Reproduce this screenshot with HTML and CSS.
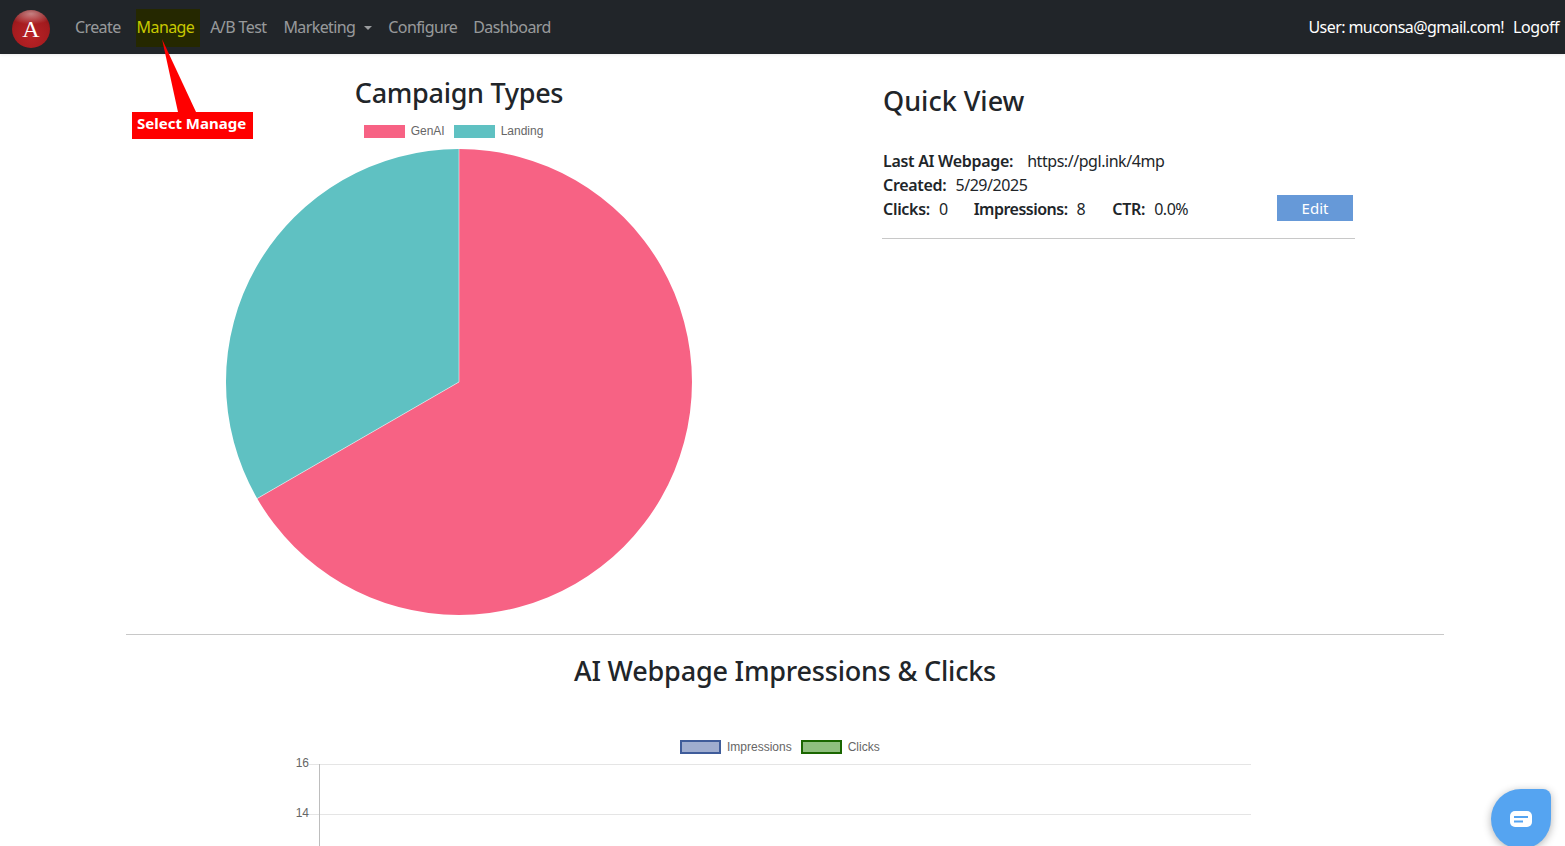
FILE: index.html
```html
<!DOCTYPE html>
<html lang="en">
<head>
    <meta charset="UTF-8">
    <meta name="viewport" content="width=device-width, initial-scale=1.0">
    <title>Dashboard</title>
    <link rel="stylesheet" href="styles.css">
</head>
<body>
    <nav class="navbar">
        <a class="brand" href="#"><span class="brand-letter">A</span></a>
        <ul class="nav-links">
            <li><a href="#">Create</a></li>
            <li><a class="active" href="#">Manage</a></li>
            <li><a href="#">A/B Test</a></li>
            <li><a class="dropdown" href="#">Marketing</a></li>
            <li><a href="#">Configure</a></li>
            <li><a href="#">Dashboard</a></li>
        </ul>
        <div class="nav-user">
            <span class="user-name">User: muconsa@gmail.com!</span>
            <a href="#">Logoff</a>
        </div>
    </nav>

    <!-- callout over the nav -->
    <svg class="callout-arrow" width="40" height="75" viewBox="0 0 40 75">
        <polygon points="2,1 18,74 36,74" fill="#ff0000"/>
    </svg>
    <div class="callout-label">Select Manage</div>

    <main class="container">
        <div class="top-row">
            <section class="pie-col">
                <h2 class="chart-title">Campaign Types</h2>
                <div class="legend legend-pie">
                    <span class="swatch swatch-pink"></span><span class="legend-text">GenAI</span>
                    <span class="swatch swatch-teal"></span><span class="legend-text">Landing</span>
                </div>
                <svg class="pie" width="468" height="468" viewBox="-234 -234 468 468">
                    <path d="M0 0 L0 -233 A233 233 0 1 1 -201.8 116.5 Z" fill="#f76284"/>
                    <path d="M0 0 L-201.8 116.5 A233 233 0 0 1 0 -233 Z" fill="#5fc1c2"/>
                    <path d="M0 -233 L0 0 L-201.8 116.5" fill="none" stroke="#fff" stroke-opacity="0.5" stroke-width="1"/>
                </svg>
            </section>

            <section class="quick-view">
                <h2 class="quick-title">Quick View</h2>
                <div class="info-line"><b>Last AI Webpage:</b><span class="url">https://pgl.ink/4mp</span></div>
                <div class="info-line"><b>Created:</b><span>5/29/2025</span></div>
                <div class="info-line stats">
                    <b>Clicks:</b><span class="val-clicks">0</span>
                    <b class="label-impr">Impressions:</b><span class="val-impr">8</span>
                    <b>CTR:</b><span>0.0%</span>
                    <button class="edit-btn">Edit</button>
                </div>
                <hr class="quick-rule">
            </section>
        </div>

        <hr class="section-rule">
        <h2 class="bar-title">AI Webpage Impressions &amp; Clicks</h2>

        <div class="bar-chart">
            <div class="legend legend-bar">
                <span class="swatch swatch-blue"></span><span class="legend-text">Impressions</span>
                <span class="swatch swatch-green"></span><span class="legend-text">Clicks</span>
            </div>
            <svg class="bar-axes" width="980" height="92" viewBox="0 0 980 92">
                <line x1="29" y1="10.5" x2="971" y2="10.5" stroke="#e5e5e5"/>
                <line x1="29" y1="60.5" x2="971" y2="60.5" stroke="#e5e5e5"/>
                <line x1="39.5" y1="10" x2="39.5" y2="92" stroke="#bdbdbd"/>
                <text x="29" y="13" text-anchor="end" class="tick">16</text>
                <text x="29" y="63" text-anchor="end" class="tick">14</text>
            </svg>
        </div>
    </main>

    <button class="chat-bubble" aria-label="Chat">
        <svg width="24" height="18" viewBox="0 0 24 18">
            <rect x="1" y="1" width="22" height="16" rx="5" fill="#fff"/>
            <rect x="5" y="6" width="14" height="2" fill="#55a4f1"/>
            <rect x="5" y="10.5" width="9" height="2" fill="#55a4f1"/>
        </svg>
    </button>
</body>
</html>
```

FILE: styles.css
```css
html, body {
    height: 846px;
    overflow: hidden;
}

body {
    margin: 0;
    font-family: "Noto Sans", Arial, sans-serif;
    font-size: 16px;
    color: #212529;
    background: #fff;
}

h2 {
    margin: 0;
    font-size: 27px;
    font-weight: 500;
    line-height: 1.2;
}

/* Navbar */
.navbar {
    display: flex;
    align-items: center;
    height: 54px;
    background: #212529;
    padding: 0 6px 0 12px;
    box-shadow: 0 1px 3px rgba(0, 0, 0, 0.08);
}

.brand {
    display: flex;
    align-items: center;
    justify-content: center;
    width: 38px;
    height: 38px;
    margin-top: 4px;
    border-radius: 50%;
    background:
        radial-gradient(ellipse 60% 28% at 50% 10%, rgba(255, 255, 255, 0.45), rgba(255, 255, 255, 0) 100%),
        radial-gradient(circle at 50% 70%, #b92226 0%, #a31b1e 60%, #6e0f10 100%);
    text-decoration: none;
}

.brand-letter {
    color: #fff;
    font-family: "Liberation Serif", serif;
    font-size: 24px;
    line-height: 1;
}

.nav-links {
    display: flex;
    align-items: center;
    list-style: none;
    margin: 0 0 0 17px;
    padding: 0;
    height: 38px;
}

.nav-links a {
    display: block;
    padding: 8px;
    color: rgba(255, 255, 255, 0.55);
    font-size: 16px;
    line-height: 22px;
    letter-spacing: -0.6px;
    text-decoration: none;
}

.nav-links a.active {
    padding: 7px 6px 9px 1px;
    margin: 1px 2px -1px 7px;
    color: #c8c800;
    background: #252800;
}

.nav-links a.dropdown {
    margin-left: 1px;
}

.dropdown::after {
    content: "";
    display: inline-block;
    margin-left: 9px;
    vertical-align: 3px;
    border-top: 4px solid;
    border-right: 4px solid transparent;
    border-left: 4px solid transparent;
}

.nav-user {
    display: flex;
    gap: 9px;
    margin-left: auto;
    color: #fff;
    letter-spacing: -0.45px;
}

.user-name {
    letter-spacing: -0.58px;
}

.nav-user a {
    color: #fff;
    text-decoration: none;
}

/* Annotation */
.callout-arrow {
    position: absolute;
    left: 160px;
    top: 38px;
}

.callout-label {
    position: absolute;
    left: 132px;
    top: 112px;
    width: 116px;
    height: 27px;
    padding-left: 5px;
    background: #ff0000;
    color: #fff;
    font-size: 15px;
    font-weight: 700;
    line-height: 22px;
}

/* Page */
.container {
    padding: 0 121px 0 126px;
}

.top-row {
    display: flex;
    height: 580px;
}

.pie-col {
    display: flex;
    flex-direction: column;
    align-items: center;
    width: 666px;
    padding-top: 23px;
}

.chart-title {
    letter-spacing: -0.3px;
}

.legend {
    display: flex;
    align-items: center;
    height: 14px;
    margin-top: 15px;
    font-family: "Liberation Sans", Arial, sans-serif;
    font-size: 12px;
    color: #666;
}

.legend-pie {
    margin-left: -2px;
}

.swatch {
    box-sizing: border-box;
    width: 41px;
    height: 13px;
    margin-right: 6px;
}

.legend-text {
    margin-right: 9px;
}

.swatch-pink {
    background: #f76284;
}

.swatch-teal {
    background: #5fc1c2;
}

.swatch-blue {
    background: #9fadcf;
    border: 2px solid #3f5c9a;
    height: 14px;
}

.swatch-green {
    background: #8fbf7f;
    border: 2px solid #1a6600;
    height: 14px;
}

.pie {
    display: block;
    margin-top: 10px;
}

.quick-view {
    width: 473px;
    margin-left: 90px;
    padding-top: 31px;
}

.quick-title {
    margin-left: 1px;
}

.info-line {
    display: flex;
    align-items: center;
    height: 24px;
    padding-left: 1px;
    letter-spacing: -0.45px;
}

.quick-title + .info-line {
    margin-top: 32px;
}

.info-line b {
    font-weight: 600;
    margin-right: 9px;
    letter-spacing: -0.3px;
}

.info-line b.label-impr {
    letter-spacing: -0.5px;
}

.info-line .url {
    margin-left: 5px;
}

.val-clicks {
    margin-right: 26px;
}

.val-impr {
    margin-right: 27px;
}

.edit-btn {
    width: 76px;
    height: 26px;
    margin: -2px 2px 0 auto;
    padding: 0;
    border: none;
    background: #6699d8;
    color: #fff;
    font-family: inherit;
    font-size: 15px;
}

.quick-rule {
    margin: 17px 0 0;
    border: none;
    border-top: 1px solid #c8c8c8;
}

.section-rule {
    margin: 0;
    border: none;
    border-top: 1px solid #c8c8c8;
}

.bar-title {
    margin-top: 20px;
    text-align: center;
    letter-spacing: -0.2px;
}

.bar-chart {
    margin-top: 53px;
    margin-left: 154px;
}

.legend-bar {
    margin: 0 0 0 400px;
}

.bar-axes {
    display: block;
    margin-top: 0;
}

.tick {
    font-family: "Liberation Sans", Arial, sans-serif;
    font-size: 12px;
    fill: #666;
}

/* Chat button */
.chat-bubble {
    position: absolute;
    right: 14px;
    top: 789px;
    display: flex;
    align-items: center;
    justify-content: center;
    width: 60px;
    height: 60px;
    padding: 0;
    border: none;
    border-radius: 50% 8px 50% 50%;
    background: #55a4f1;
    box-shadow: 0 2px 8px rgba(0, 0, 0, 0.3);
}
```
